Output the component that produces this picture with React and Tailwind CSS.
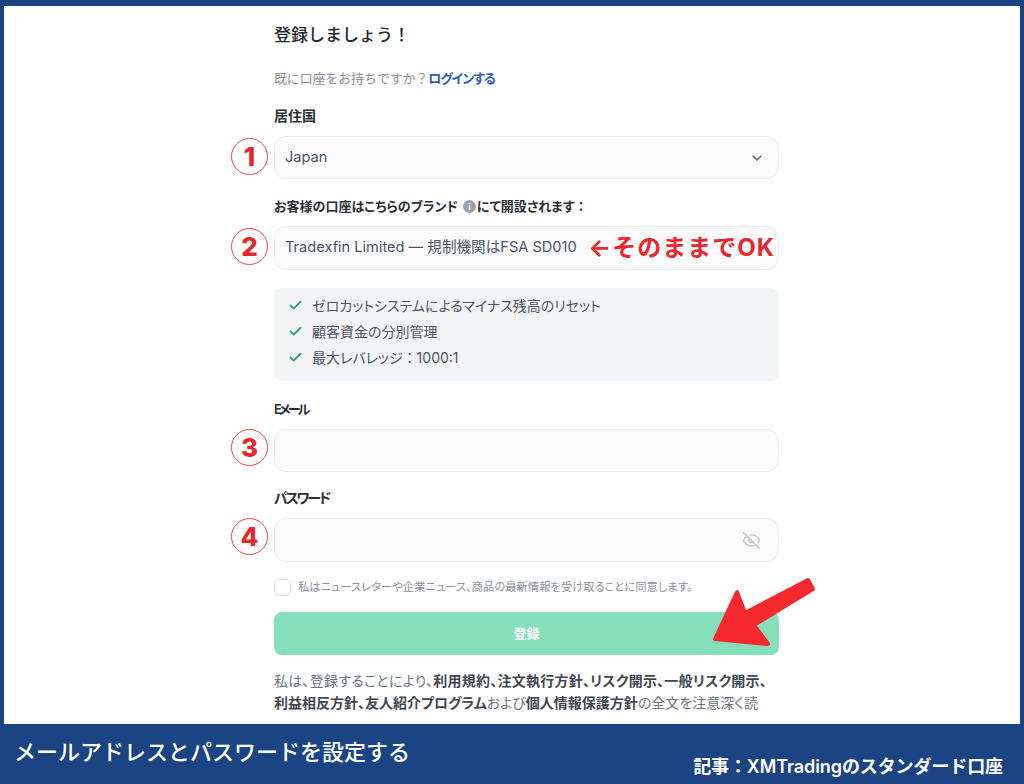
import React from "react";
import { ChevronDown, EyeOff, Check } from "lucide-react";

const font = "[font-family:Inter,'Noto_Sans_CJK_JP',sans-serif] [font-feature-settings:'palt']";
const full = "[font-feature-settings:normal]";

function Badge({ n, top }) {
  return (
    <div className={`absolute -left-[43px] ${top} w-[37px] h-[37px] rounded-full border-[1.5px] border-[#e0484c] bg-white flex items-center justify-center text-[26px] leading-none font-extrabold text-[#e5282e]`}>
      {n}
    </div>
  );
}

function Label({ children, className = "" }) {
  return <div className={`h-5 leading-5 font-semibold text-[#2b2f36] ${className}`}>{children}</div>;
}

function Field({ n, top = "top-[2px]", className = "", height = "h-[43px]", children }) {
  return (
    <div className={`relative ${className}`}>
      <Badge n={n} top={top} />
      <div className={`${height} rounded-xl border border-[#ebedf0] bg-[#fafafb] flex items-center justify-between pl-[10px] pr-[13px] text-[14.6px] text-[#4b5563]`}>
        {children}
      </div>
    </div>
  );
}

function Tick({ children }) {
  return (
    <div className="h-[26px] flex items-center gap-[9px] text-[14px] text-[#4b5563]">
      <Check size={15} strokeWidth={3} className="text-[#35a077] shrink-0" />
      <span>{children}</span>
    </div>
  );
}

export default function App() {
  return (
    <div className={`w-[1024px] h-[784px] bg-[#1c4382] overflow-hidden flex flex-col ${font}`}>
      <main className="mt-[6px] mx-[4px] h-[718px] bg-white overflow-hidden shrink-0 relative">
        <div className="ml-[270px] w-[505px] pt-[15px]">
          <h1 className={`h-7 leading-7 text-[17px] font-medium text-[#23272e] ${full}`}>登録しましょう！</h1>
          <p className="mt-[19px] h-5 leading-5 text-[13px] text-[#8b9099]">
            <span className={`${full} tracking-[-0.15px]`}>既に口座をお持ちですか？</span>
            <a className="font-semibold text-[#2f5bb7] tracking-[-1px]">ログインする</a>
          </p>

          <Label className="mt-[18px] text-[14px]">居住国</Label>
          <Field n="1" className="mt-[10px]">
            <span>Japan</span>
            <ChevronDown size={16} className="text-[#5f6670]" />
          </Field>

          <Label className="mt-[17px] text-[13px] flex items-center">
            お客様の口座はこちらのブランド
            <span className="ml-[5px] mr-[1px] w-[13px] h-[13px] rounded-full bg-[#9aa1ab] text-white text-[9px] leading-[13px] text-center font-bold">i</span>
            <span>にて開設されます</span>
            <span className={full}>：</span>
          </Label>
          <Field n="2" className="mt-[10px]" height="h-[44px]">
            <span>Tradexfin Limited — 規制機関はFSA SD010</span>
            <span className={`absolute right-[4px] top-[9px] h-[26px] leading-[26px] text-[24px] font-bold text-[#e5282e] whitespace-nowrap tracking-[1px] ${full}`}>←そのままでOK</span>
          </Field>

          <div className="mt-[18px] h-[93px] rounded-lg bg-[#f3f4f6] pl-[14px] pt-[4px]">
            <Tick>ゼロカットシステムによるマイナス残高のリセット</Tick>
            <Tick>顧客資金の分別管理</Tick>
            <Tick>最大レバレッジ<span className={full}>：</span>1000:1</Tick>
          </div>

          <Label className="mt-[18px] text-[13px] tracking-[-2.8px]">Eメール</Label>
          <Field n="3" top="top-0" className="mt-[10px]" />

          <Label className="mt-[16px] text-[14px] tracking-[-2.2px]">パスワード</Label>
          <Field n="4" top="top-0" className="mt-[10px]" height="h-[44px]">
            <span />
            <EyeOff size={19} className="text-[#c6cbd2] mr-[4px]" />
          </Field>

          <label className="mt-[17px] h-[17px] flex items-center gap-[7px] text-[11.3px] text-[#8b9099]">
            <span className="w-[17px] h-[17px] rounded-[5px] border border-[#dfe2e6] bg-white shrink-0" />
            私はニュースレターや企業ニュース、商品の最新情報を受け取ることに同意します。
          </label>

          <button className="mt-[16px] w-full h-[43px] rounded-lg bg-[#86dfbb] text-white text-[13px] font-semibold">登録</button>

          <p className="mt-[15px] text-[14px] leading-[22px] text-[#6b7280] whitespace-nowrap">
            <span className="tracking-[0.24px]">
              私は、登録することにより、<b className="font-semibold text-[#414750]">利用規約、注文執行方針、リスク開示、一般リスク開示、</b>
            </span>
            <br />
            <b className="font-semibold text-[#414750]">利益相反方針、友人紹介プログラム</b>および<b className="font-semibold text-[#414750]">個人情報保護方針</b>の全文を注意深く読
          </p>
        </div>

        <svg className="absolute left-[692px] top-[564px] w-[130px] h-[90px]" viewBox="696 570 130 90">
          <path
            d="M737 592 L715 639 L768 644 L754 625 L813 589 L808 580 L745 613 Z"
            fill="#f5282e"
            stroke="#f5282e"
            strokeWidth="4"
            strokeLinejoin="round"
          />
        </svg>
      </main>

      <footer className={`flex-1 relative text-white ${full}`}>
        <div className="absolute left-[14px] top-[12px] h-8 leading-8 text-[22px] font-medium">メールアドレスとパスワードを設定する</div>
        <div className="absolute right-[21px] top-[31px] h-6 leading-6 text-[18px] font-semibold tracking-[-0.1px]">記事：XMTradingのスタンダード口座</div>
      </footer>
    </div>
  );
}
